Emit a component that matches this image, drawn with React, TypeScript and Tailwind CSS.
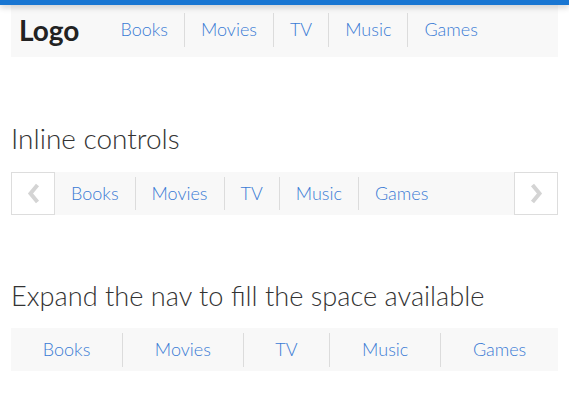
import React from "react";

const items = ["Books", "Movies", "TV", "Music", "Games"];

function Chevron({ dir }: { dir: "left" | "right" }) {
  return (
    <svg width="13" height="21" viewBox="0 0 13 21" fill="none">
      <polyline
        points={dir === "left" ? "10.5,2 3.5,10.5 10.5,19" : "2.5,2 9.5,10.5 2.5,19"}
        stroke="#d4d4d4"
        strokeWidth="4"
        strokeLinecap="butt"
        strokeLinejoin="miter"
      />
    </svg>
  );
}

export default function App() {
  return (
    <div className="relative min-h-screen bg-white font-['Lato','Liberation_Sans',sans-serif]">
      <div className="absolute top-0 left-0 right-0 z-10 h-[5px] bg-[#1976d2] shadow-[0_2px_6px_rgba(0,0,0,0.22)]" />
      <div className="px-[11px]">
        {/* Nav 1 */}
        <nav className="flex h-[57px] items-center bg-[#f8f8f8] pt-[2px]">
          <div className="pl-2 text-[28px] font-bold leading-none text-[#222]">Logo</div>
          <ul className="ml-[25px] flex items-center">
            {items.map((it, i) => (
              <li
                key={it}
                className={`flex h-[34px] items-center px-4 text-[18px] font-light text-[#3a7bd5] ${
                  i > 0 ? "border-l border-[#dcdcdc]" : ""
                }`}
              >
                {it}
              </li>
            ))}
          </ul>
        </nav>

        <h2 className="mt-[65px] font-['Lato_Light','Lato',sans-serif] text-[28px] font-light leading-[1.2] text-[#333]">
          Inline controls
        </h2>

        {/* Nav 2 */}
        <nav className="mt-4 flex h-[43px] items-center bg-[#f8f8f8]">
          <button className="flex h-[43px] w-[44px] items-center justify-center border border-[#dddddd] bg-white">
            <Chevron dir="left" />
          </button>
          <ul className="flex items-center">
            {items.map((it, i) => (
              <li
                key={it}
                className={`flex h-[33px] items-center px-4 text-[18px] font-light text-[#3a7bd5] ${
                  i > 0 ? "border-l border-[#dcdcdc]" : ""
                }`}
              >
                {it}
              </li>
            ))}
          </ul>
          <div className="flex-1" />
          <button className="flex h-[43px] w-[44px] items-center justify-center border border-[#dddddd] bg-white">
            <Chevron dir="right" />
          </button>
        </nav>

        <h2 className="mt-[65px] font-['Lato_Light','Lato',sans-serif] text-[27.2px] font-light leading-[1.2] text-[#333]">
          Expand the nav to fill the space available
        </h2>

        {/* Nav 3 */}
        <nav className="mt-4 flex h-[43px] items-center bg-[#f8f8f8]">
          {items.map((it, i) => (
            <div
              key={it}
              className={`flex h-[34px] flex-auto items-center justify-center px-4 text-[18px] font-light text-[#3a7bd5] ${
                i > 0 ? "border-l border-[#dcdcdc]" : ""
              }`}
            >
              {it}
            </div>
          ))}
        </nav>
      </div>
    </div>
  );
}
